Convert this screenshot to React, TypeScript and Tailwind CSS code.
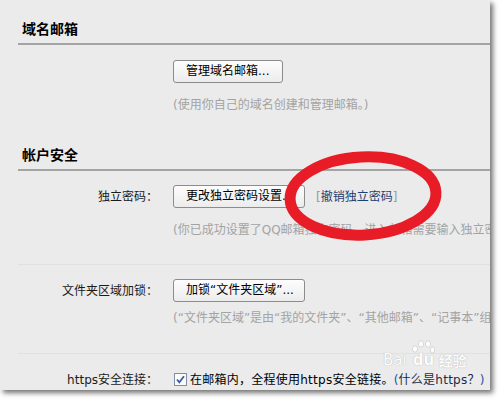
const font = "font-['DejaVu_Sans','Noto_Sans_CJK_SC',sans-serif]"

function Btn({ label, width }: { label: string; width: string }) {
  return (
    <div
      className={`${width} h-[23px] shrink-0 overflow-hidden whitespace-nowrap rounded-[3px] border border-[#8c8c8c] bg-gradient-to-b from-[#fdfdfd] to-[#ececec] pl-[12px] text-[12px] leading-[21px] text-black`}
    >
      {label}
    </div>
  )
}

function Heading({ title, top }: { title: string; top: string }) {
  return (
    <div className={`${top} border-b-2 border-[#a4a4a4] pb-[5px] pl-[4px] text-[14px] font-bold leading-[18px] text-black`}>
      {title}
    </div>
  )
}

function Row({ label, children, top }: { label: string; children: React.ReactNode; top: string }) {
  return (
    <div className={`${top} flex h-[23px] items-center`}>
      <div className="w-[140px] shrink-0 text-right text-[12px] text-[#1a1a1a]">{label}</div>
      <div className="ml-[15px] flex items-center whitespace-nowrap">{children}</div>
    </div>
  )
}

function Hint({ text, top }: { text: string; top: string }) {
  return (
    <div className={`${top} ml-[155px] whitespace-nowrap text-[12px] leading-[16px] text-[#a3a3a3]`}>{text}</div>
  )
}

export default function App() {
  return (
    <div className={`relative h-[400px] w-[500px] overflow-hidden bg-white ${font}`}>
      <div className="relative h-[390px] w-[490px] overflow-hidden bg-[#ebebeb] pl-[18px] shadow-[3px_3px_5px_rgba(0,0,0,0.55)]">
        <Heading title="域名邮箱" top="mt-[20px]" />
        <div className="ml-[155px] mt-[15px]">
          <Btn label="管理域名邮箱..." width="w-[110px]" />
        </div>
        <Hint top="mt-[14px]" text="(使用你自己的域名创建和管理邮箱。)" />

        <Heading title="帐户安全" top="mt-[33px]" />
        <Row label="独立密码：" top="mt-[14px]">
          <Btn label="更改独立密码设置..." width="w-[132px]" />
          <span className="ml-[11px] text-[12px] text-[#999]">
            [<span className="text-[#1c3f73]">撤销独立密码</span>]
          </span>
        </Row>
        <Hint top="mt-[14px]" text="(你已成功设置了QQ邮箱独立密码，进入邮箱需要输入独立密码。)" />
        <div className="mt-[26px] h-px bg-[#e1e1e1]" />

        <Row label="文件夹区域加锁：" top="mt-[14px]">
          <Btn label="加锁“文件夹区域”..." width="w-[132px]" />
        </Row>
        <Hint top="mt-[8px]" text="(“文件夹区域”是由“我的文件夹”、“其他邮箱”、“记事本”组成。)" />
        <div className="mt-[27px] h-px bg-[#e1e1e1]" />

        <Row label="https安全连接：" top="mt-[14px]">
          <svg width="13" height="13" viewBox="0 0 13 13" className="ml-[1px]">
            <rect x="0.5" y="0.5" width="12" height="12" fill="#fbfbfb" stroke="#7f8ea6" />
            <path d="M3 6.5 L5.3 9.3 L10 3.2" fill="none" stroke="#3a5f9e" strokeWidth="1.8" />
          </svg>
          <span className="ml-[3px] text-[12px] tracking-[0.25px] text-black">
            在邮箱内，全程使用https安全链接。<span className="text-[#1b4fa8]">(</span>
            <span className="text-[#1a2a4a]">什么是https？</span>
            <span className="text-[#1b4fa8]">)</span>
          </span>
        </Row>

        <div className="pointer-events-none absolute left-[383px] top-[340px] flex items-end whitespace-nowrap text-white opacity-85 [text-shadow:0_0_1px_#999]">
          <span className="text-[15px] leading-none">Bai</span>
          <div className="relative ml-[4px] h-[28px] w-[24px] shrink-0">
            <svg width="24" height="16" viewBox="0 0 24 16" className="absolute left-0 top-0">
              <g fill="white" stroke="#c0c0c0" strokeWidth="0.6">
                <ellipse cx="4" cy="9" rx="2.6" ry="3.2" />
                <ellipse cx="10" cy="4" rx="2.6" ry="3.2" />
                <ellipse cx="17" cy="4" rx="2.6" ry="3.2" />
                <ellipse cx="21.5" cy="10" rx="2.2" ry="3" />
              </g>
            </svg>
            <span className="absolute bottom-0 left-[2px] text-[15px] font-bold leading-none">du</span>
          </div>
          <span className="ml-[4px] text-[14px] font-bold leading-none">经验</span>
        </div>
      </div>

      <svg className="pointer-events-none absolute left-0 top-0" width="500" height="400">
        <ellipse
          cx="363"
          cy="196"
          rx="73"
          ry="39"
          fill="none"
          stroke="#e81c27"
          strokeWidth="11"
          transform="rotate(-3 363 196)"
        />
      </svg>
    </div>
  )
}
